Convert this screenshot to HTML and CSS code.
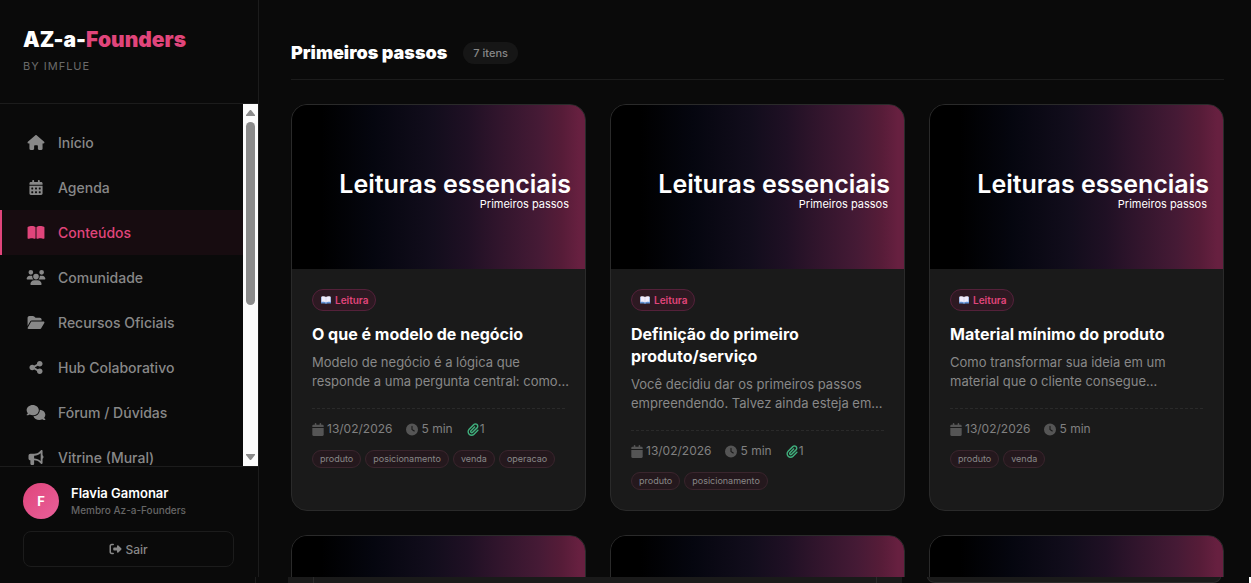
FILE: index.html
```html
<!DOCTYPE html>
<html lang="pt-BR">
<head>
<meta charset="utf-8">
<title>AZ-a-Founders</title>
<link rel="stylesheet" href="styles.css">
</head>
<body>
<svg class="sprite" aria-hidden="true">
  <symbol id="house" viewBox="0 0 576 512"><path d="M575.8 255.5c0 18-15 32.1-32 32.1h-32l.7 160.2c0 2.7-.2 5.4-.5 8.1V472c0 22.1-17.9 40-40 40H456c-1.1 0-2.2 0-3.3-.1c-1.4 .1-2.8 .1-4.2 .1H416 392c-22.1 0-40-17.9-40-40V448 384c0-17.7-14.3-32-32-32H256c-17.7 0-32 14.3-32 32v64 24c0 22.1-17.9 40-40 40H160 128.1c-1.5 0-3-.1-4.5-.2c-1.2 .1-2.4 .2-3.6 .2H104c-22.1 0-40-17.9-40-40V360c0-.9 0-1.9 .1-2.8V287.6H32c-18 0-32-14-32-32.1c0-9 3-17 10-24L266.4 8c7-7 15-8 22-8s15 2 21 7L564.8 231.5c8 7 12 15 11 24z"/></symbol>
  <symbol id="calendar-days" viewBox="0 0 448 512"><path d="M128 0c17.700 0 32 14.300 32 32V64H288V32c0-17.700 14.300-32 32-32s32 14.300 32 32V64h48c26.500 0 48 21.500 48 48v48H0V112C0 85.500 21.500 64 48 64H96V32c0-17.700 14.300-32 32-32zM0 192H448V464c0 26.500-21.500 48-48 48H48c-26.500 0-48-21.500-48-48V192zm64 80v32c0 8.800 7.200 16 16 16h32c8.800 0 16-7.200 16-16V272c0-8.800-7.200-16-16-16H80c-8.800 0-16 7.200-16 16zm128 0v32c0 8.800 7.200 16 16 16h32c8.800 0 16-7.200 16-16V272c0-8.800-7.200-16-16-16H208c-8.800 0-16 7.200-16 16zm144-16c-8.800 0-16 7.200-16 16v32c0 8.800 7.200 16 16 16h32c8.800 0 16-7.200 16-16V272c0-8.800-7.200-16-16-16H336zM64 400v32c0 8.800 7.200 16 16 16h32c8.800 0 16-7.200 16-16V400c0-8.800-7.200-16-16-16H80c-8.800 0-16 7.200-16 16zm144-16c-8.800 0-16 7.200-16 16v32c0 8.800 7.200 16 16 16h32c8.800 0 16-7.200 16-16V400c0-8.800-7.200-16-16-16H208zm112 16v32c0 8.800 7.200 16 16 16h32c8.800 0 16-7.200 16-16V400c0-8.800-7.200-16-16-16H336c-8.800 0-16 7.200-16 16z"/></symbol>
  <symbol id="book-open" viewBox="0 0 576 512"><path d="M249.600 471.500c10.800 3.800 22.400-4.100 22.400-15.500V78.600c0-4.200-1.600-8.400-5-11C247.400 52 202.400 32 144 32C93.500 32 46.300 45.300 18.100 56.100C6.800 60.500 0 71.700 0 83.800V454.100c0 11.900 12.800 20.200 24.100 16.500C55.600 460.100 105.500 448 144 448c33.900 0 79 14 105.600 23.500zm76.800 0C353 462 398.100 448 432 448c38.500 0 88.400 12.100 119.900 22.600c11.300 3.800 24.100-4.600 24.100-16.500V83.800c0-12.100-6.800-23.300-18.100-27.600C529.700 45.300 482.500 32 432 32c-58.400 0-103.400 20-123 35.600c-3.300 2.600-5 6.800-5 11V456c0 11.400 11.700 19.300 22.400 15.500z"/></symbol>
  <symbol id="users" viewBox="0 0 640 512"><path d="M144 0a80 80 0 1 1 0 160A80 80 0 1 1 144 0zM512 0a80 80 0 1 1 0 160A80 80 0 1 1 512 0zM0 298.700C0 239.800 47.800 192 106.700 192h42.700c15.900 0 31 3.500 44.600 9.700c-1.300 7.200-1.900 14.700-1.900 22.300c0 38.200 16.800 72.500 43.300 96c-.2 0-.4 0-.7 0H21.300C9.600 320 0 310.400 0 298.700zM405.300 320c-.2 0-.4 0-.7 0c26.600-23.500 43.300-57.800 43.300-96c0-7.600-.7-15-1.900-22.300c13.600-6.300 28.700-9.700 44.600-9.700h42.700C592.200 192 640 239.800 640 298.700c0 11.800-9.600 21.300-21.300 21.300H405.300zM224 224a96 96 0 1 1 192 0 96 96 0 1 1 -192 0zM128 485.300C128 411.700 187.700 352 261.300 352H378.700C452.300 352 512 411.700 512 485.300c0 14.700-11.900 26.700-26.700 26.700H154.700c-14.700 0-26.700-11.900-26.700-26.700z"/></symbol>
  <symbol id="folder-open" viewBox="0 0 576 512"><path d="M88.700 223.800L0 375.800V96C0 60.700 28.700 32 64 32H181.500c17 0 33.300 6.700 45.300 18.700l26.500 26.500c12 12 28.300 18.700 45.300 18.700H416c35.300 0 64 28.700 64 64v32H144c-22.800 0-43.800 12.100-55.300 31.800zm27.600 16.100C122.100 230 132.600 224 144 224H544c11.500 0 22 6.100 27.700 16.100s5.700 22.200-.1 32.100l-112 192C453.900 474 443.400 480 432 480H32c-11.500 0-22-6.100-27.700-16.100s-5.700-22.200 .1-32.100l112-192z"/></symbol>
  <symbol id="share" viewBox="0 0 448 512"><path d="M352 224c53 0 96-43 96-96s-43-96-96-96s-96 43-96 96c0 4 .2 8 .7 11.900l-94.100 47C145.400 170.200 121.900 160 96 160c-53 0-96 43-96 96s43 96 96 96c25.900 0 49.400-10.200 66.600-26.900l94.100 47c-.5 3.900-.7 7.800-.7 11.900c0 53 43 96 96 96s96-43 96-96s-43-96-96-96c-25.900 0-49.400 10.200-66.600 26.900l-94.100-47c.5-3.900 .7-7.800 .7-11.900s-.2-8-.7-11.900l94.100-47C302.600 213.800 326.100 224 352 224z"/></symbol>
  <symbol id="comments" viewBox="0 0 640 512"><path d="M208 352c114.900 0 208-78.800 208-176S322.900 0 208 0S0 78.800 0 176c0 38.600 14.700 74.300 39.600 103.400c-3.500 9.400-8.700 17.700-14.200 24.700c-4.800 6.200-9.700 11-13.300 14.300c-1.800 1.600-3.300 2.900-4.300 3.700c-.5 .4-.9 .7-1.100 .8l-.2 .2C1 327.200-1.400 334.400 .8 340.900S9.100 352 16 352c21.800 0 43.800-5.600 62.100-12.500c9.200-3.500 17.800-7.400 25.200-11.400C134.100 343.300 169.800 352 208 352zM448 176c0 112.300-99.100 196.900-216.500 207C255.800 457.400 336.400 512 432 512c38.200 0 73.900-8.700 104.700-23.900c7.500 4 16 7.900 25.200 11.400c18.300 6.900 40.300 12.500 62.100 12.500c6.900 0 13.100-4.500 15.200-11.100c2.100-6.600-.2-13.800-5.800-17.900l-.2-.2c-.2-.2-.6-.4-1.100-.8c-1-.8-2.500-2-4.300-3.700c-3.600-3.300-8.500-8.100-13.300-14.300c-5.500-7-10.700-15.400-14.200-24.700c24.900-29 39.600-64.700 39.600-103.400c0-92.800-84.900-168.900-192.600-175.500c.4 5.100 .6 10.300 .6 15.500z"/></symbol>
  <symbol id="bullhorn" viewBox="0 0 512 512"><path d="M480 32c0-12.900-7.800-24.600-19.800-29.600s-25.700-2.200-34.900 6.900L381.700 53c-48 48-113.100 75-181 75H192 160 64c-35.300 0-64 28.700-64 64v96c0 35.300 28.700 64 64 64l0 128c0 17.700 14.300 32 32 32h64c17.700 0 32-14.300 32-32V352l8.700 0c67.900 0 133 27 181 75l43.600 43.600c9.200 9.200 22.900 11.900 34.900 6.900s19.800-16.600 19.800-29.600V300.400c18.600-8.800 32-32.500 32-60.400s-13.400-51.600-32-60.400V32zm-64 76.700V240 371.300C357.200 317.800 280.500 288 200.700 288H192V192h8.700c79.800 0 156.500-29.800 215.300-83.300z"/></symbol>
  <symbol id="exit" viewBox="0 0 512 512"><path d="M377.900 105.900L500.700 228.700c7.200 7.200 11.300 17.100 11.300 27.300s-4.100 20.100-11.300 27.300L377.900 406.100c-6.400 6.400-15 9.900-24 9.900c-18.700 0-33.900-15.200-33.900-33.900l0-62.100-128 0c-17.700 0-32-14.300-32-32l0-64c0-17.700 14.300-32 32-32l128 0 0-62.100c0-18.700 15.200-33.900 33.900-33.900c9 0 17.600 3.600 24 9.900zM160 96L96 96c-17.700 0-32 14.300-32 32l0 256c0 17.700 14.300 32 32 32l64 0c17.700 0 32 14.300 32 32s-14.300 32-32 32l-64 0c-53 0-96-43-96-96L0 128C0 75 43 32 96 32l64 0c17.700 0 32 14.300 32 32s-14.300 32-32 32z"/></symbol>
  <symbol id="calendar" viewBox="0 0 448 512"><path d="M96 32V64H48C21.500 64 0 85.500 0 112v48H448V112c0-26.500-21.500-48-48-48H352V32c0-17.700-14.300-32-32-32s-32 14.300-32 32V64H160V32c0-17.700-14.300-32-32-32S96 14.300 96 32zM448 192H0V464c0 26.500 21.500 48 48 48H400c26.500 0 48-21.500 48-48V192z"/></symbol>
  <symbol id="clock" viewBox="0 0 512 512"><path d="M256 0a256 256 0 1 1 0 512A256 256 0 1 1 256 0zM232 120V256c0 8 4 15.500 10.700 20l96 64c11 7.400 25.900 4.400 33.300-6.700s4.400-25.900-6.700-33.300L280 243.200V120c0-13.300-10.700-24-24-24s-24 10.700-24 24z"/></symbol>
  <symbol id="clip" viewBox="0 0 448 512"><path d="M364.200 83.800c-24.400-24.400-64-24.400-88.400 0l-184 184c-42.100 42.100-42.100 110.300 0 152.400s110.300 42.100 152.400 0l152-152c10.900-10.900 28.700-10.900 39.600 0s10.900 28.700 0 39.600l-152 152c-64 64-167.600 64-231.600 0s-64-167.600 0-231.600l184-184c46.300-46.300 121.300-46.300 167.600 0s46.300 121.300 0 167.600l-176 176c-28.600 28.600-75 28.600-103.600 0s-28.600-75 0-103.600l144-144c10.900-10.900 28.700-10.900 39.600 0s10.900 28.700 0 39.600l-144 144c-6.700 6.700-6.700 17.700 0 24.400s17.700 6.700 24.400 0l176-176c24.400-24.400 24.400-64 0-88.400z"/></symbol>
  <symbol id="book" viewBox="0 0 20 16"><path fill="#5f8fd0" d="M0 2h20v13h-7l-3 1-3-1H0z"/><path fill="#f0edfa" d="M1 1c4-1 7-1 9 1 2-2 5-2 9-1v11c-4-1-7-1-9 1-2-2-5-2-9-1z"/><path fill="none" stroke="#c3c4e0" d="M10 2v11"/></symbol>
</svg>
<div class="app">
  <aside class="sidebar">
    <header class="brand">
      <div class="brand-name">AZ-a-<span>Founders</span></div>
      <div class="brand-by">BY IMFLUE</div>
    </header>
    <div class="nav-area">
      <nav class="nav">
        <a href="#"><svg><use href="#house"/></svg>Início</a>
        <a href="#"><svg><use href="#calendar-days"/></svg>Agenda</a>
        <a href="#" class="active"><svg><use href="#book-open"/></svg>Conteúdos</a>
        <a href="#"><svg><use href="#users"/></svg>Comunidade</a>
        <a href="#"><svg><use href="#folder-open"/></svg>Recursos Oficiais</a>
        <a href="#"><svg><use href="#share"/></svg>Hub Colaborativo</a>
        <a href="#"><svg><use href="#comments"/></svg>Fórum / Dúvidas</a>
        <a href="#"><svg><use href="#bullhorn"/></svg>Vitrine (Mural)</a>
      </nav>
      <div class="scrollbar" aria-hidden="true">
        <svg viewBox="0 0 9 6"><path d="M4 0h1l4 5v1H0V5z"/></svg>
        <div class="track"><div class="thumb"></div></div>
        <svg viewBox="0 0 9 6"><path d="M4 6h1l4-5V0H0v1z"/></svg>
      </div>
    </div>
    <footer class="account">
      <div class="user">
        <div class="avatar">F</div>
        <div>
          <div class="user-name">Flavia Gamonar</div>
          <div class="user-role">Membro Az-a-Founders</div>
        </div>
      </div>
      <button type="button" class="logout"><svg><use href="#exit"/></svg>Sair</button>
    </footer>
  </aside>
  <main class="content">
    <header class="section-head">
      <h1>Primeiros passos</h1>
      <span class="count">7 itens</span>
    </header>
    <div class="cards">
      <article class="card">
        <div class="cover"><div><p class="cover-title">Leituras essenciais</p><p class="cover-sub">Primeiros passos</p></div></div>
        <div class="card-body">
          <span class="kind"><svg><use href="#book"/></svg>Leitura</span>
          <h2>O que é modelo de negócio</h2>
          <p class="desc">Modelo de negócio é a lógica que responde a uma pergunta central: como...</p>
          <div class="meta"><span><svg><use href="#calendar"/></svg>13/02/2026</span><span><svg><use href="#clock"/></svg>5 min</span><span class="files"><svg><use href="#clip"/></svg>1</span></div>
          <div class="tags"><span>produto</span><span>posicionamento</span><span>venda</span><span>operacao</span></div>
        </div>
      </article>
      <article class="card">
        <div class="cover"><div><p class="cover-title">Leituras essenciais</p><p class="cover-sub">Primeiros passos</p></div></div>
        <div class="card-body">
          <span class="kind"><svg><use href="#book"/></svg>Leitura</span>
          <h2>Definição do primeiro produto/serviço</h2>
          <p class="desc">Você decidiu dar os primeiros passos empreendendo. Talvez ainda esteja em...</p>
          <div class="meta"><span><svg><use href="#calendar"/></svg>13/02/2026</span><span><svg><use href="#clock"/></svg>5 min</span><span class="files"><svg><use href="#clip"/></svg>1</span></div>
          <div class="tags"><span>produto</span><span>posicionamento</span></div>
        </div>
      </article>
      <article class="card">
        <div class="cover"><div><p class="cover-title">Leituras essenciais</p><p class="cover-sub">Primeiros passos</p></div></div>
        <div class="card-body">
          <span class="kind"><svg><use href="#book"/></svg>Leitura</span>
          <h2>Material mínimo do produto</h2>
          <p class="desc">Como transformar sua ideia em um material que o cliente consegue...</p>
          <div class="meta"><span><svg><use href="#calendar"/></svg>13/02/2026</span><span><svg><use href="#clock"/></svg>5 min</span></div>
          <div class="tags"><span>produto</span><span>venda</span></div>
        </div>
      </article>
      <article class="card"><div class="cover"></div></article>
      <article class="card"><div class="cover"></div></article>
      <article class="card"><div class="cover"></div></article>
    </div>
  </main>
</div>
<div class="dock" aria-hidden="true">
  <div class="dock-side"></div>
  <div class="dock-wide"><div></div></div>
  <div class="dock-card"></div>
  <div class="dock-edge"></div>
</div>
</body>
</html>
```

FILE: styles.css
```css
* { box-sizing: border-box; }

body {
  margin: 0;
  height: 100vh;
  overflow: hidden;
  display: flex;
  flex-direction: column;
  background: #0a0a0a;
  color: #fff;
  font-family: Inter, "Liberation Sans", sans-serif;
}

h1, h2, p { margin: 0; }

svg { fill: currentColor; flex: none; }

.sprite { display: none; }

.app {
  flex: 1;
  min-height: 0;
  display: flex;
  overflow: hidden;
}

/* Sidebar */
.sidebar {
  flex: 0 0 259px;
  display: flex;
  flex-direction: column;
  border-right: 1px solid #1c1c1c;
}

.brand {
  height: 104px;
  padding: 27px 23px;
  border-bottom: 1px solid #1c1c1c;
}

.brand-name {
  font-size: 21px;
  line-height: 26px;
  font-weight: 900;
}

.brand-name span { color: #e0457b; }

.brand-by {
  margin-top: 5px;
  font-size: 11px;
  line-height: 16px;
  letter-spacing: 1px;
  color: #6a6a6a;
}

.nav-area {
  flex: 1;
  min-height: 0;
  display: flex;
}

.nav {
  flex: 1;
  padding-top: 16px;
  overflow: hidden;
}

.nav a {
  display: flex;
  align-items: center;
  gap: 12px;
  height: 45px;
  padding-left: 24px;
  border-left: 2px solid transparent;
  color: #888;
  font-size: 14px;
  font-weight: 500;
  text-decoration: none;
}

.nav a.active {
  border-left-color: #e0457b;
  background: #170c10;
  color: #e0457b;
}

.nav svg { width: 20px; height: 15px; }

.scrollbar {
  width: 15px;
  display: flex;
  flex-direction: column;
  align-items: center;
  padding: 6px 0;
  background: #fcfcfc;
  color: #8b8b8b;
}

.scrollbar svg { width: 9px; height: 6px; }

.track {
  flex: 1;
  width: 9px;
  padding: 6px 0;
}

.thumb {
  height: 56%;
  border-radius: 5px;
  background: #8b8b8b;
}

.account {
  padding: 16px 24px 10px 23px;
  border-top: 1px solid #1c1c1c;
}

.user {
  display: flex;
  align-items: center;
  gap: 12px;
}

.avatar {
  display: flex;
  align-items: center;
  justify-content: center;
  width: 36px;
  height: 36px;
  border-radius: 50%;
  background: linear-gradient(135deg, #e0457b, #e8609a);
  font-size: 13px;
  font-weight: 700;
}

.user-name {
  font-size: 13px;
  line-height: 18px;
  font-weight: 600;
}

.user-role {
  font-size: 10px;
  line-height: 16px;
  font-weight: 500;
  color: #666;
}

.logout {
  display: flex;
  align-items: center;
  justify-content: center;
  gap: 3px;
  width: 100%;
  height: 36px;
  margin-top: 12px;
  border: 1px solid #1c1c1c;
  border-radius: 8px;
  background: none;
  color: #888;
  font: 500 12px Inter, sans-serif;
}

.logout svg { width: 13px; height: 12px; }

/* Content */
.content {
  flex: 1;
  min-width: 0;
  padding: 41px 27px 0 32px;
  overflow: hidden;
}

.section-head {
  display: flex;
  align-items: center;
  gap: 16px;
  height: 39px;
  padding-bottom: 15px;
  border-bottom: 1px solid #1c1c1c;
}

h1 {
  font-size: 18px;
  line-height: 24px;
  font-weight: 900;
}

.count {
  padding: 0 10px;
  border-radius: 11px;
  background: #161616;
  color: #888;
  font-size: 11px;
  line-height: 22px;
  font-weight: 500;
}

.cards {
  display: grid;
  grid-template-columns: repeat(3, 1fr);
  gap: 24px;
  padding-top: 24px;
}

.card {
  overflow: hidden;
  border: 1px solid #2a2a2a;
  border-radius: 16px;
  background: #1a1a1a;
}

.cover {
  display: flex;
  justify-content: flex-end;
  align-items: center;
  aspect-ratio: 293 / 164;
  padding: 6px 14px 0 0;
  background: linear-gradient(90deg, #000 10%, #05060f 28%, #120d1c 48%, #1f1024 60%, #2e142b 69%, #451a35 84%, #561c38 92%, #672040 98%);
  text-align: right;
}

.cover-title {
  font-size: 25px;
  line-height: 28px;
  font-weight: 600;
}

.cover-sub {
  padding-right: 2px;
  font-size: 11px;
  line-height: 13px;
}

.card-body { padding: 20px; }

.kind {
  display: flex;
  align-items: center;
  gap: 4px;
  width: fit-content;
  height: 22px;
  padding: 0 7px 0 8px;
  border: 1px solid #54213a;
  border-radius: 11px;
  background: #2d1922;
  color: #e0457b;
  font-size: 10px;
  font-weight: 600;
}

.kind svg { width: 10px; height: 8px; }

h2 {
  margin-top: 12px;
  font-size: 16px;
  line-height: 22px;
  font-weight: 700;
}

.desc {
  margin: 8px -6px 17px 0;
  color: #888;
  font-size: 13px;
  line-height: 19px;
}

.meta {
  display: flex;
  gap: 14px;
  padding-top: 12px;
  border-top: 1px dashed #2a2a2a;
  color: #808080;
  font-size: 12px;
  line-height: 16px;
}

.meta span {
  display: flex;
  align-items: center;
  gap: 3px;
}

.meta svg { width: 12px; height: 13px; color: #555; }

.meta .files { gap: 1px; }

.meta .files svg { color: #3fae7c; }

.tags {
  display: flex;
  gap: 4px;
  padding-top: 13px;
}

.tags span {
  padding: 0 7px;
  border: 1px solid #3a252d;
  border-radius: 9px;
  background: #24181d;
  color: #888;
  font-size: 9px;
  line-height: 16px;
}

/* Panels peeking in along the lower edge */
.dock {
  flex: 0 0 6px;
  display: flex;
}

.dock-side {
  width: 256px;
  margin-right: 32px;
  border-right: 1px solid #1c1c1c;
}

.dock-wide {
  flex: 1;
  padding: 0 25px;
  background: #1a1a1a;
}

.dock-wide div {
  height: 6px;
  border: 1px solid #2a2a2a;
  border-width: 0 1px;
}

.dock-card {
  width: 294px;
  margin: 0 28px 0 25px;
  border: 1px solid #2a2a2a;
  border-top: 0;
  border-radius: 0 0 16px 16px / 0 0 12px 12px;
  background: #1a1a1a;
}

.dock-edge {
  width: 2px;
  background: #fcfcfc;
}
```
